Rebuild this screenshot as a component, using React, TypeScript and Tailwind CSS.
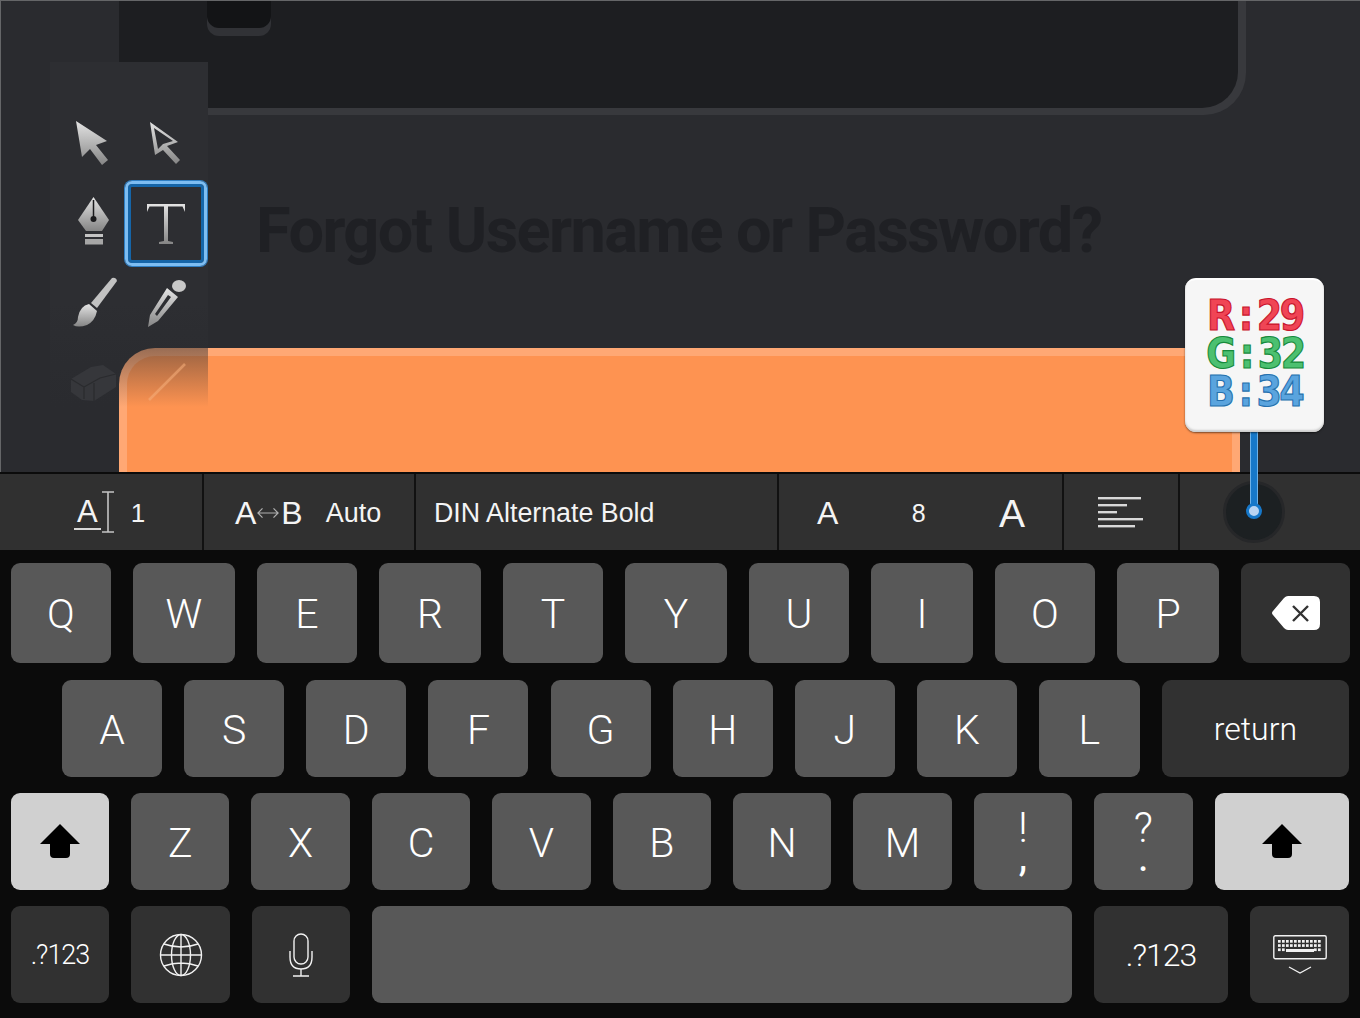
import type { ReactNode } from "react";

const sans = "font-['Liberation_Sans',Arial,sans-serif]";

function Key({ w, tone = "mid", children }: { w: string; tone?: "mid" | "dark" | "light"; children?: ReactNode }) {
  const toneClass =
    tone === "mid"
      ? "bg-[#585858] text-white"
      : tone === "dark"
        ? "bg-[#313131] text-white"
        : "bg-[#d0d0d0] text-black";
  return (
    <div className={`${w} h-full shrink-0 rounded-[9px] flex items-center justify-center ${toneClass}`}>
      {children}
    </div>
  );
}

function Letter({ children }: { children: ReactNode }) {
  return <span className="mt-[3px] font-['Roboto',sans-serif] font-light text-[41px] leading-none">{children}</span>;
}

function Punct({ top, bottom }: { top: string; bottom: string }) {
  return (
    <span className="flex flex-col items-center font-['Roboto',sans-serif] text-[42px] leading-[29px]">
      <span className="font-light">{top}</span>
      <span className="font-normal">{bottom}</span>
    </span>
  );
}

function ShiftIcon() {
  return (
    <svg width="40" height="35" viewBox="0 0 40 35" fill="#000">
      <path d="M20 0 L40 20 L30 20 L30 30 Q30 34 26 34 L14 34 Q10 34 10 30 L10 20 L0 20 Z" />
    </svg>
  );
}

function DeleteIcon() {
  return (
    <svg width="48" height="34" viewBox="0 0 48 34">
      <path d="M16 0 H42 Q48 0 48 6 V28 Q48 34 42 34 H16 Q14 34 12 32 L1 19 Q-1 17 1 15 L12 2 Q14 0 16 0 Z" fill="#fff" />
      <path d="M21 10 L36 25 M36 10 L21 25" stroke="#333" strokeWidth="2.4" />
    </svg>
  );
}

function GlobeIcon() {
  return (
    <svg width="44" height="44" viewBox="0 0 44 44" fill="none" stroke="#f2f2f2" strokeWidth="1.4">
      <circle cx="22" cy="22" r="20.5" />
      <ellipse cx="22" cy="22" rx="9.5" ry="20.5" />
      <path d="M22 1.5 V42.5 M1.5 22 H42.5 M5 11 Q22 17 39 11 M5 33 Q22 27 39 33" />
    </svg>
  );
}

function MicIcon() {
  return (
    <svg width="24" height="44" viewBox="0 0 24 44" fill="none" stroke="#f2f2f2" strokeWidth="1.4">
      <rect x="5" y="1" width="14" height="30" rx="7" />
      <path d="M1 18 V24 Q1 36 12 36 Q23 36 23 24 V18 M12 36 V43 M4 43 H20" />
    </svg>
  );
}

function KeyboardIcon() {
  const dots: ReactNode[] = [];
  for (let r = 0; r < 3; r++) {
    for (let c = 0; c < 11; c++) {
      if (r === 2 && c > 1 && c < 9) continue;
      dots.push(<rect key={`${r}-${c}`} x={5 + c * 4} y={5 + r * 4.2} width="2.7" height="2.7" fill="#f2f2f2" />);
    }
  }
  return (
    <svg width="54" height="40" viewBox="0 0 54 40" fill="none">
      <rect x="0.8" y="0.8" width="52.4" height="23" rx="1.5" stroke="#f2f2f2" strokeWidth="1.4" />
      {dots}
      <rect x="13" y="14" width="28" height="3" fill="#f2f2f2" />
      <path d="M16 32 L27 38 L38 32" stroke="#f2f2f2" strokeWidth="1.3" />
    </svg>
  );
}

function ToolPanel() {
  return (
    <div className="absolute left-[49px] top-[61px] w-[158px] h-[345px] bg-gradient-to-b from-[#2d2e32] from-[70%] via-[#2d2e3273] via-[84%] to-[#2d2e3200]">
      <svg className="absolute left-[25px] top-[58px]" width="36" height="46" viewBox="0 0 36 46">
        <defs>
          <linearGradient id="metal" x1="0" y1="0" x2="0" y2="1">
            <stop offset="0" stopColor="#e4e4e4" />
            <stop offset="1" stopColor="#858585" />
          </linearGradient>
        </defs>
        <path d="M1 1 L32 21 L21 25 L33 40 L27 45 L15 29 L7 37 Z" fill="url(#metal)" />
      </svg>
      <svg className="absolute left-[99px] top-[58px]" width="34" height="46" viewBox="0 0 34 46">
        <path fillRule="evenodd" d="M1 2 L29 22 L18 26 L31 40 L27 44 L14 30 L6 35 Z M5 8 L9 29 L14 24 L24 21 Z" fill="url(#metal)" />
      </svg>
      <svg className="absolute left-[28px] top-[135px]" width="32" height="49" viewBox="0 0 32 49">
        <path d="M15.5 0 L31 23 L24 34 H8 L0 23 Z" fill="url(#metal)" />
        <path d="M15.5 3 V20" stroke="#1b1b1d" strokeWidth="1.5" />
        <circle cx="15.5" cy="22" r="3" fill="#1b1b1d" />
        <rect x="7" y="37" width="18" height="3" fill="#c4c4c4" />
        <rect x="7" y="42" width="18" height="5.5" fill="#a6a6a6" />
      </svg>
      <div className="absolute left-[75px] top-[119px] w-[82px] h-[85px] rounded-[7px] border-[3px] border-[#7dbdf2] shadow-[0_0_0_1px_#2f7fc4,inset_0_0_0_3px_#1565a8]" />
      <svg className="absolute left-[97px] top-[141px]" width="38" height="42" viewBox="0 0 38 42">
        <path d="M0 1 H38 V9 L35.5 3.5 H21 V38 L26 39 V41 H12 V39 L17 38 V3.5 H2.5 L0 9 Z" fill="url(#metal)" />
      </svg>
      <svg className="absolute left-[22px] top-[215px]" width="46" height="52" viewBox="0 0 46 52">
        <path d="M40 1 Q44 0 45 4 L25 31 L19 26 Z" fill="#c2c2c2" />
        <path d="M17 27 L25 34 Q23 44 15 48 Q6 51 1 48 Q6 46 6 40 Q8 29 17 27 Z" fill="url(#metal)" />
      </svg>
      <svg className="absolute left-[97px] top-[216px]" width="40" height="50" viewBox="0 0 40 50">
        <ellipse cx="32" cy="8" rx="7" ry="6" fill="#c8c8c8" />
        <path fillRule="evenodd" d="M20 10 L31 19 L11 43 L1 49 L3 37 Z M21 17 L8 36 L10 38 L24 19 Z" fill="url(#metal)" />
      </svg>
      <svg className="absolute left-[20px] top-[303px]" width="46" height="36" viewBox="0 0 46 36">
        <path d="M1 14 L21 2 L33 0 L46 9 L46 22 L24 36 L12 35 L1 27 Z" fill="#36373b" />
        <path d="M1 14 L14 22 L14 34 M14 22 L30 13 L46 9 M24 36 L24 18" stroke="#2a2b2e" strokeWidth="1.2" fill="none" />
      </svg>
      <svg className="absolute left-[97px] top-[300px]" width="40" height="40" viewBox="0 0 40 40">
        <path d="M38 2 L2 38" stroke="#f7b07c" strokeWidth="2.6" opacity="0.55" />
      </svg>
    </div>
  );
}

function BadgeLine({ label, value, className }: { label: string; value: string; className: string }) {
  return (
    <span className={`flex h-[38px] items-center scale-x-[0.87] tracking-[-1px] ${className}`}>
      <span>{label}</span>
      <span className="mx-[5px]">:</span>
      <span className="tracking-[-3px]">{value}</span>
    </span>
  );
}

function Canvas() {
  return (
    <div className="relative h-[472px] overflow-hidden bg-[#2a2b2f] border-l border-t border-[#8d8d8f]/60">
      <div className="ml-[118px] w-[1127px] h-[115px] -mt-px rounded-b-[42px] bg-[#38393d] pb-[7px] pr-[8px]">
        <div className="h-full rounded-b-[36px] bg-[#1d1e21] pl-[88px]">
          <div className="w-[64px] h-[36px] rounded-b-[12px] bg-[#313236] pb-[8px]">
            <div className="h-full rounded-b-[12px] bg-[#131416]" />
          </div>
        </div>
      </div>
      <div className="ml-[255px] mt-[79px] h-[154px]">
        <span className="font-['Roboto',sans-serif] font-bold text-[63px] leading-[74px] tracking-[-1.55px] text-[#1f2024] whitespace-nowrap">
          Forgot Username or Password?
        </span>
      </div>
      <div className="ml-[118px] w-[1121px] h-[124px] rounded-tl-[36px] rounded-tr-[8px] bg-[#ffa874] pt-[8px] pr-[8px] pl-[8px]">
        <div className="h-full rounded-tl-[28px] bg-[#fe9351]" />
      </div>
      <ToolPanel />
      <div className="absolute left-[1249px] top-[430px] w-[8px] h-[42px] bg-[#1778c9] border-x border-[#6db1e8]" />
      <div className="absolute left-[1184px] top-[277px] w-[139px] h-[154px] rounded-[11px] bg-[#f6f6f6] border-t-[2px] border-[#fff] shadow-[0_1px_2px_#0008,inset_0_-2px_2px_#ccc] flex flex-col items-center pt-[17px] font-['DejaVu_Sans',sans-serif] font-bold text-[42px] leading-[38px]">
        <BadgeLine label="R" value="29" className="text-[#f04555] [-webkit-text-stroke:1.2px_#c8132b]" />
        <BadgeLine label="G" value="32" className="text-[#4cc070] [-webkit-text-stroke:1.2px_#168a3b]" />
        <BadgeLine label="B" value="34" className="text-[#5aa4de] [-webkit-text-stroke:1.2px_#2470ae]" />
      </div>
    </div>
  );
}

function Cell({ w, children, className = "" }: { w: string; children?: ReactNode; className?: string }) {
  return (
    <div className={`${w} relative h-full shrink-0 border-r-2 border-[#111] flex items-center pt-[2px] ${className}`}>
      {children}
    </div>
  );
}

function Toolbar() {
  return (
    <div className={`relative h-[78px] flex bg-[#303030] border-t-2 border-[#0b0b0b] text-[#f4f4f4] ${sans}`}>
      <Cell w="w-[204px]">
        <span className="ml-[74px] text-[31px] leading-none border-b-2 border-[#d8d8d8] pb-[1px] px-[3px]">A</span>
        <svg className="-mt-[2px]" width="14" height="42" viewBox="0 0 14 42" fill="none" stroke="#c4c4c4" strokeWidth="1.6">
          <path d="M1 1 H13 M7 1 V41 M1 41 H13" />
        </svg>
        <span className="ml-[16px] text-[26px] leading-none">1</span>
      </Cell>
      <Cell w="w-[212px]">
        <span className="ml-[31px] text-[32px] leading-none">A</span>
        <svg className="mx-[1px]" width="22" height="14" viewBox="0 0 24 14" fill="none" stroke="#b0b0b0" strokeWidth="1.3">
          <path d="M1 7 H23 M6 2 L1 7 L6 12 M18 2 L23 7 L18 12" />
        </svg>
        <span className="ml-[1px] text-[32px] leading-none">B</span>
        <span className="ml-[23px] text-[27px] leading-none">Auto</span>
      </Cell>
      <Cell w="w-[363px]">
        <span className="ml-[18px] text-[26.8px] leading-none">DIN Alternate Bold</span>
      </Cell>
      <Cell w="w-[285px]" className="justify-between pl-[38px] pr-[37px]">
        <span className="text-[32px] leading-none">A</span>
        <span className="text-[25px] leading-none">8</span>
        <span className="text-[39px] leading-none">A</span>
      </Cell>
      <Cell w="w-[116px]" className="justify-center">
        <svg width="46" height="34" viewBox="0 0 46 34" fill="#d8d8d8" className="-ml-[2px]">
          <rect x="1" y="1" width="43" height="2.4" />
          <rect x="1" y="8" width="29" height="2.4" />
          <rect x="1" y="15" width="19" height="2.4" />
          <rect x="1" y="22" width="45" height="2.4" />
          <rect x="1" y="29" width="37" height="2.4" />
        </svg>
      </Cell>
      <div className="flex-1 flex items-center pl-[43px]">
        <div className="w-[62px] h-[62px] rounded-full bg-[#1c2022] border-[3px] border-[#262729]" />
      </div>
      <div className="absolute left-[1250px] top-[-2px] w-[8px] h-[36px] bg-[#1778c9] border-x border-[#6db1e8]" />
      <div className="absolute left-[1246px] top-[29px] w-[16px] h-[16px] rounded-full bg-[#b9d4f2] border-[3px] border-[#1778c9]" />
    </div>
  );
}

function Keyboard() {
  return (
    <div className={`h-[468px] bg-[#0b0b0b] pt-[13px] ${sans}`}>
      <div className="h-[100px] pl-[11px] flex gap-[22px]">
        <Key w="w-[100px]"><Letter>Q</Letter></Key>
        <Key w="w-[102px]"><Letter>W</Letter></Key>
        <Key w="w-[100px]"><Letter>E</Letter></Key>
        <Key w="w-[102px]"><Letter>R</Letter></Key>
        <Key w="w-[100px]"><Letter>T</Letter></Key>
        <Key w="w-[102px]"><Letter>Y</Letter></Key>
        <Key w="w-[100px]"><Letter>U</Letter></Key>
        <Key w="w-[102px]"><Letter>I</Letter></Key>
        <Key w="w-[100px]"><Letter>O</Letter></Key>
        <Key w="w-[102px]"><Letter>P</Letter></Key>
        <Key w="w-[109px]" tone="dark"><DeleteIcon /></Key>
      </div>
      <div className="h-[97px] mt-[17px] pl-[62px] flex gap-[22.15px]">
        <Key w="w-[100px]"><Letter>A</Letter></Key>
        <Key w="w-[100px]"><Letter>S</Letter></Key>
        <Key w="w-[100px]"><Letter>D</Letter></Key>
        <Key w="w-[100px]"><Letter>F</Letter></Key>
        <Key w="w-[100px]"><Letter>G</Letter></Key>
        <Key w="w-[100px]"><Letter>H</Letter></Key>
        <Key w="w-[100px]"><Letter>J</Letter></Key>
        <Key w="w-[100px]"><Letter>K</Letter></Key>
        <Key w="w-[100.6px]"><Letter>L</Letter></Key>
        <Key w="w-[187px]" tone="dark">
          <span className="font-['Roboto',sans-serif] font-light text-[32px] leading-none">return</span>
        </Key>
      </div>
      <div className="h-[97px] mt-[16px] pl-[11px] flex gap-[22px]">
        <Key w="w-[98px]" tone="light"><ShiftIcon /></Key>
        <Key w="w-[98.4px]"><Letter>Z</Letter></Key>
        <Key w="w-[98.4px]"><Letter>X</Letter></Key>
        <Key w="w-[98.4px]"><Letter>C</Letter></Key>
        <Key w="w-[98.4px]"><Letter>V</Letter></Key>
        <Key w="w-[98.4px]"><Letter>B</Letter></Key>
        <Key w="w-[98.4px]"><Letter>N</Letter></Key>
        <Key w="w-[98.4px]"><Letter>M</Letter></Key>
        <Key w="w-[98.4px]"><Punct top="!" bottom="," /></Key>
        <Key w="w-[98.4px]"><Punct top="?" bottom="." /></Key>
        <Key w="w-[134px]" tone="light"><ShiftIcon /></Key>
      </div>
      <div className="h-[97px] mt-[16px] pl-[11px] flex gap-[22px]">
        <Key w="w-[98px]" tone="dark">
          <span className="mt-[2px] font-['Roboto',sans-serif] font-light text-[27px] tracking-[-1px] leading-none">.?123</span>
        </Key>
        <Key w="w-[99px]" tone="dark"><GlobeIcon /></Key>
        <Key w="w-[98px]" tone="dark"><MicIcon /></Key>
        <Key w="w-[700px]" />
        <Key w="w-[134px]" tone="dark">
          <span className="font-['Roboto',sans-serif] font-light text-[32px] tracking-[-1px] leading-none">.?123</span>
        </Key>
        <Key w="w-[99px]" tone="dark"><KeyboardIcon /></Key>
      </div>
    </div>
  );
}

export default function App() {
  return (
    <div className="w-[1360px] h-[1018px] overflow-hidden bg-[#0b0b0b]">
      <Canvas />
      <Toolbar />
      <Keyboard />
    </div>
  );
}
